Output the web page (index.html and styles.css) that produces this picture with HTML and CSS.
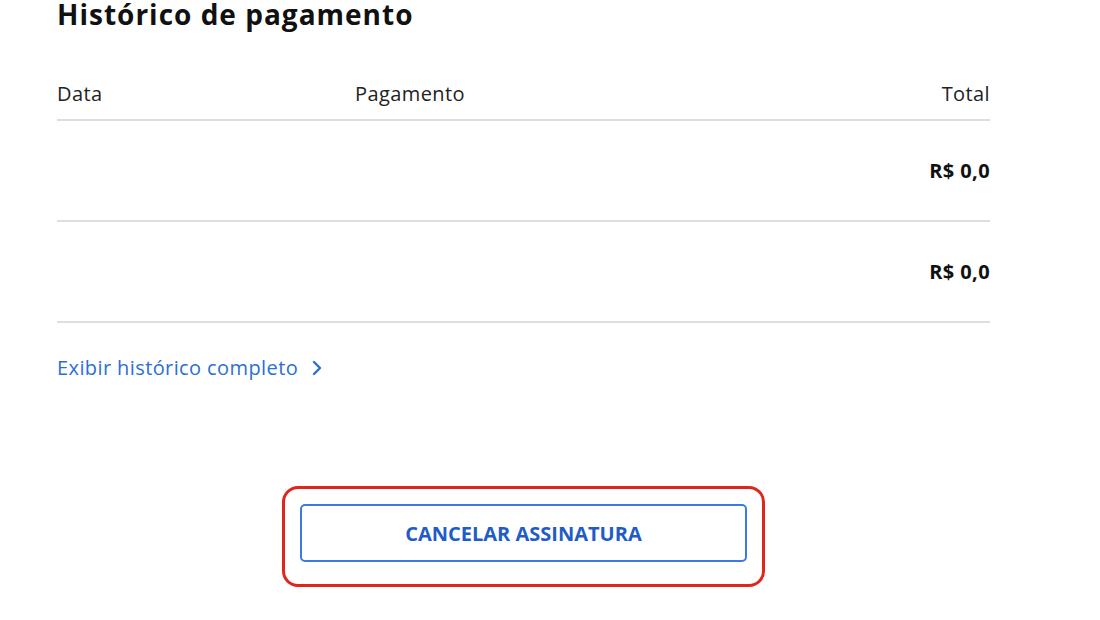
FILE: index.html
```html
<!DOCTYPE html>
<html lang="pt-BR">
<head>
<meta charset="utf-8">
<link rel="stylesheet" href="styles.css">
</head>
<body>
<main class="page">
  <h1 class="title">Histórico de pagamento</h1>
  <div class="table">
    <div class="row head">
      <span class="c-date">Data</span>
      <span class="c-pay">Pagamento</span>
      <span class="c-total">Total</span>
    </div>
    <div class="row body">
      <span class="c-date"></span>
      <span class="c-pay"></span>
      <span class="c-total amount">R$ 0,0</span>
    </div>
    <div class="row body">
      <span class="c-date"></span>
      <span class="c-pay"></span>
      <span class="c-total amount">R$ 0,0</span>
    </div>
  </div>
  <a class="more" href="#">Exibir histórico completo
    <svg class="chev" width="10" height="16" viewBox="0 0 10 16" aria-hidden="true"><path d="M2 2 L8 8 L2 14" fill="none" stroke="currentColor" stroke-width="2.4" stroke-linecap="round" stroke-linejoin="round"/></svg>
  </a>
  <div class="actions">
    <div class="highlight">
      <button class="cancel" type="button">CANCELAR ASSINATURA</button>
    </div>
  </div>
</main>
</body>
</html>
```
FILE: styles.css
```css
* { box-sizing: border-box; }
html, body { margin: 0; background: #fff; }
body {
  font-family: "Open Sans", "Liberation Sans", sans-serif;
  color: #1c1c1c;
}
.page {
  width: 990px;
  padding-left: 57px;
}
.title {
  margin: 0;
  font-size: 28px;
  line-height: 28px;
  letter-spacing: 1px;
  font-weight: 700;
  color: #111;
}
.table { margin-top: 39px; }
.row {
  display: grid;
  grid-template-columns: 298px 1fr 200px;
  align-items: center;
  border-bottom: 2px solid #dedede;
  font-size: 20px;
  letter-spacing: 0.4px;
}
.row.head {
  height: 54px;
  color: #222;
}
.row.body {
  height: 101px;
}
.c-total { text-align: right; }
.amount {
  font-weight: 700;
  color: #111;
}
.more {
  display: flex;
  width: fit-content;
  align-items: center;
  gap: 14px;
  margin-top: 31px;
  font-size: 20px;
  line-height: 27px;
  letter-spacing: 0.4px;
  color: #2a6fd6;
  text-decoration: none;
}
.chev { color: #2a6fd6; }
.actions {
  display: flex;
  justify-content: center;
  margin-top: 105px;
}
.highlight {
  padding: 15px 15px 22px;
  border: 3px solid #e0261b;
  border-radius: 16px;
}
.cancel {
  display: block;
  width: 447px;
  height: 58px;
  border: 2px solid #3b7be0;
  border-radius: 5px;
  background: #fff;
  font-family: "Open Sans", "Liberation Sans", sans-serif;
  font-size: 20px;
  font-weight: 700;
  color: #1f5cc8;
  cursor: pointer;
}
```
